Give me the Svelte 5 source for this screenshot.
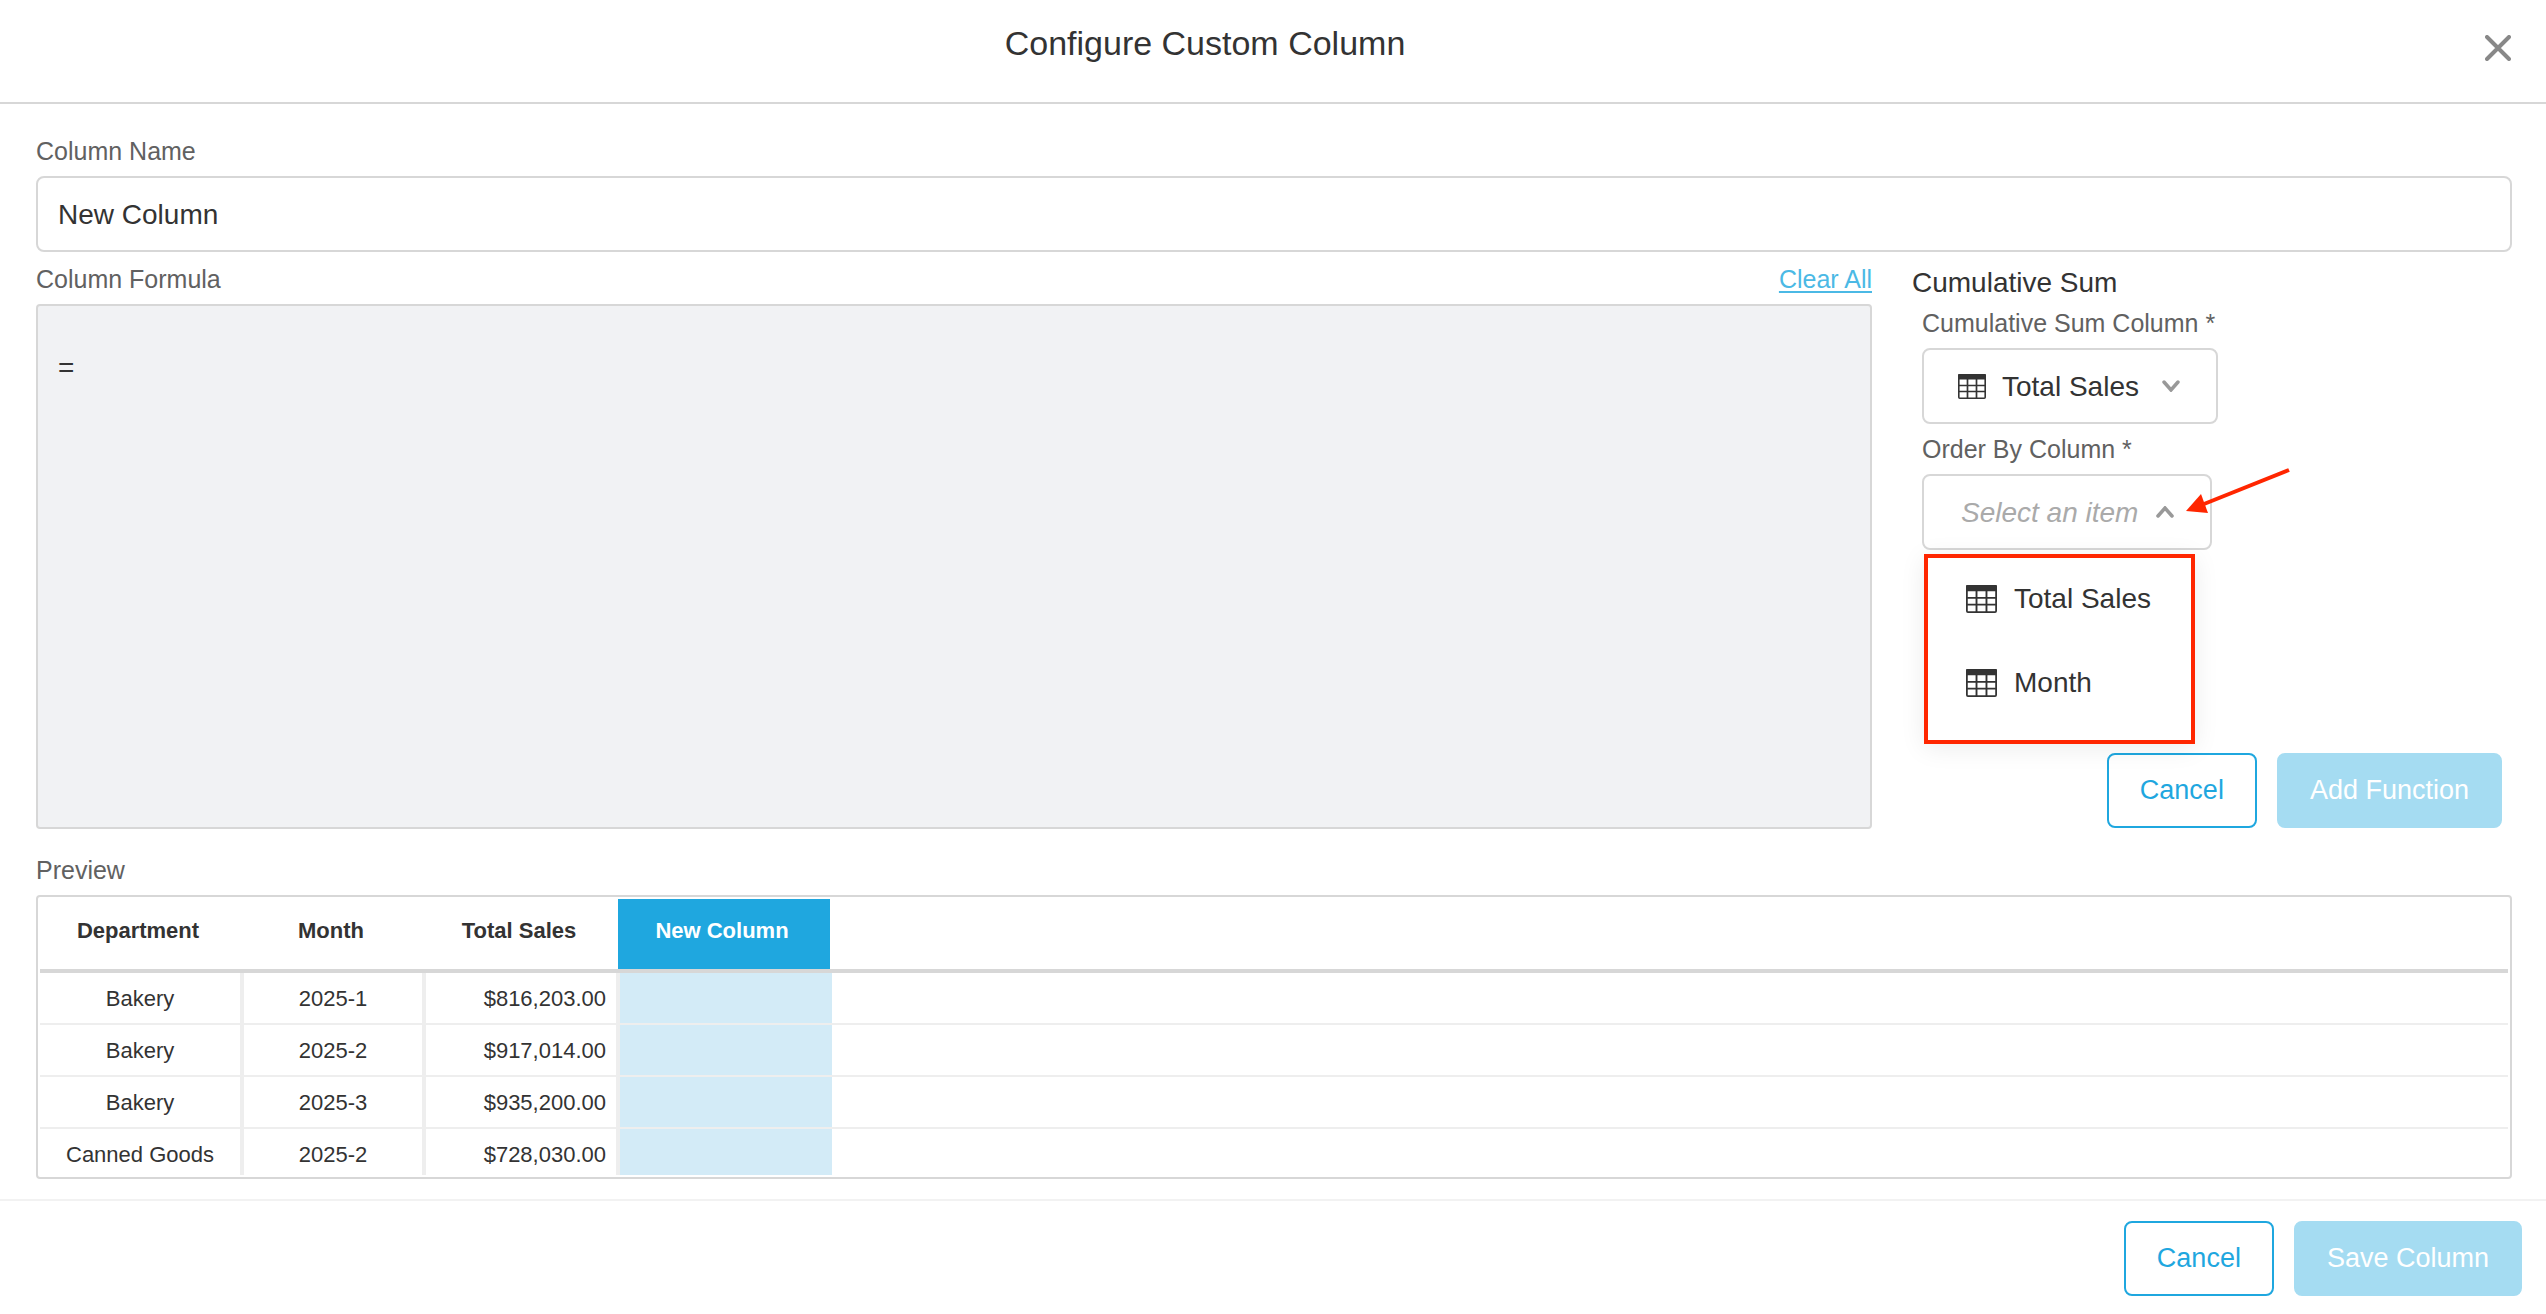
<script>
  const columns = ['Total Sales', 'Month'];
  const rows = [
    { department: 'Bakery', month: '2025-1', sales: '$816,203.00' },
    { department: 'Bakery', month: '2025-2', sales: '$917,014.00' },
    { department: 'Bakery', month: '2025-3', sales: '$935,200.00' },
    { department: 'Canned Goods', month: '2025-2', sales: '$728,030.00' }
  ];
  let name = $state('New Column');
  let formula = $state('=');
  let sumColumn = $state('Total Sales');
  let orderBy = $state('');
  let menuOpen = $state(true);

  function pick(column) {
    orderBy = column;
    menuOpen = false;
  }
</script>

{#snippet tableIcon()}
  <svg class="table-icon" viewBox="0 0 28 25" preserveAspectRatio="none" aria-hidden="true">
    <rect x="0.8" y="0.8" width="26.400" height="23.400" rx="1" fill="none" stroke="currentColor" stroke-width="1.600" />
    <path d="M0 1a1 1 0 0 1 1-1h26a1 1 0 0 1 1 1v4.500H0z" fill="currentColor" />
    <path d="M9.500 5v19M18.500 5v19M1 11.500h26M1 17.500h26" fill="none" stroke="currentColor" stroke-width="1.700" />
  </svg>
{/snippet}

{#snippet chevron(d)}
  <svg class="chevron" viewBox="0 0 18 12" aria-hidden="true">
    <path {d} fill="none" stroke="currentColor" stroke-width="3.500" stroke-linecap="round" />
  </svg>
{/snippet}

<div class="dialog" role="dialog" aria-labelledby="dialog-title">
  <header>
    <h1 id="dialog-title">Configure Custom Column</h1>
    <button class="close" type="button" aria-label="Close">
      <svg viewBox="0 0 26 26" aria-hidden="true">
        <path d="M2 2l22 22M24 2L2 24" fill="none" stroke="currentColor" stroke-width="4" stroke-linecap="round" />
      </svg>
    </button>
  </header>

  <main>
    <label class="caption first" for="column-name">Column Name</label>
    <input id="column-name" type="text" bind:value={name} />

    <div class="editor">
      <section class="formula">
        <div class="formula-head">
          <label class="caption" for="column-formula">Column Formula</label>
          <a href="#clear" onclick={() => (formula = '=')}>Clear All</a>
        </div>
        <textarea id="column-formula" bind:value={formula}></textarea>
      </section>

      <section class="function">
        <h2>Cumulative Sum</h2>
        <div class="fields">
          <label class="caption" for="sum-column">Cumulative Sum Column *</label>
          <div class="select">
            {@render tableIcon()}
            <select id="sum-column" bind:value={sumColumn}>
              {#each columns as column}<option>{column}</option>{/each}
            </select>
            {@render chevron('M2 2l7 8 7-8')}
          </div>

          <label class="caption" for="order-column">Order By Column *</label>
          <div class="select order">
            <select id="order-column" class:empty={!orderBy} bind:value={orderBy}>
              <option value="">Select an item</option>
              {#each columns as column}<option>{column}</option>{/each}
            </select>
            {@render chevron('M2 10l7-8 7 8')}
            {#if menuOpen}
              <div class="menu">
                {#each columns as column}
                  <button type="button" onclick={() => pick(column)}>{@render tableIcon()}{column}</button>
                {/each}
              </div>
            {/if}
            <svg class="pointer" viewBox="0 0 106 48" aria-hidden="true">
              <path d="M103 3L18 37" stroke="currentColor" stroke-width="4" />
              <path d="M0 44L15 27L22 46z" fill="currentColor" />
            </svg>
          </div>
        </div>
        <div class="actions">
          <button class="btn" type="button">Cancel</button>
          <button class="btn primary" type="button" disabled>Add Function</button>
        </div>
      </section>
    </div>

    <h3 class="caption">Preview</h3>
    <div class="preview">
      <table>
        <colgroup>
          <col class="department" /><col class="month" /><col class="sales" /><col class="added" /><col />
        </colgroup>
        <thead>
          <tr>
            <th><span>Department</span></th>
            <th><span>Month</span></th>
            <th><span>Total Sales</span></th>
            <th class="new"><span>{name}</span></th>
            <td></td>
          </tr>
        </thead>
        <tbody>
          {#each rows as row}
            <tr>
              <td>{row.department}</td>
              <td>{row.month}</td>
              <td class="amount">{row.sales}</td>
              <td class="new"></td>
              <td class="rest"></td>
            </tr>
          {/each}
        </tbody>
      </table>
    </div>
  </main>

  <footer>
    <button class="btn" type="button">Cancel</button>
    <button class="btn primary" type="button" disabled>Save Column</button>
  </footer>
</div>

<style>
  :global(body) {
    background: #fff;
  }
  .dialog,
  .dialog * {
    box-sizing: border-box;
  }
  .dialog {
    min-height: 100vh;
    color: #333;
    font-family: 'Liberation Sans', Arial, sans-serif;
    font-size: 28px;
    line-height: 32px;
  }
  button,
  input,
  select,
  textarea {
    font: inherit;
    color: inherit;
  }
  header {
    display: flex;
    align-items: flex-start;
    height: 104px;
    padding-right: 32px;
    border-bottom: 2px solid #d7d7d7;
  }
  h1 {
    flex: 1;
    margin: 0;
    padding-top: 22px;
    font-size: 34px;
    font-weight: 400;
    line-height: 42px;
    text-align: center;
  }
  .close {
    display: flex;
    justify-content: flex-end;
    width: 104px;
    padding: 35px 3px 0 0;
    border: 0;
    background: none;
    color: #888;
  }
  .close svg {
    width: 26px;
    height: 26px;
  }
  main {
    padding: 27px 34px 20px 36px;
  }
  .caption {
    display: block;
    margin: 0;
    color: #616161;
    font-size: 25px;
    font-weight: 400;
    line-height: 40px;
  }
  .first {
    margin-bottom: 5px;
  }
  input {
    display: block;
    width: 100%;
    height: 76px;
    padding: 2px 20px 0;
    border: 2px solid #d7d7d7;
    border-radius: 8px;
    background: #fff;
  }
  .editor {
    display: grid;
    grid-template-columns: minmax(0, 1fr) 600px;
    gap: 40px;
  }
  .formula-head {
    display: flex;
    justify-content: space-between;
    padding: 7px 0 5px;
    font-size: 25px;
    line-height: 40px;
  }
  a {
    color: #4bb9e5;
    text-underline-offset: 3px;
    text-decoration-thickness: 2px;
  }
  textarea {
    display: block;
    width: 100%;
    height: 525px;
    padding: 46px 20px;
    border: 2px solid #d7d7d7;
    border-radius: 4px;
    background: #f1f2f4;
    resize: none;
  }
  .function {
    display: flex;
    flex-direction: column;
    padding: 15px 10px 1px 0;
  }
  h2 {
    margin: 0;
    font-size: 28px;
    font-weight: 400;
    line-height: 32px;
  }
  .fields {
    padding: 4px 0 0 10px;
  }
  .fields .caption {
    height: 45px;
  }
  .select {
    position: relative;
    display: flex;
    align-items: center;
    gap: 16px;
    width: 296px;
    height: 76px;
    margin-bottom: 5px;
    padding: 0 36px 0 34px;
    border: 2px solid #d7d7d7;
    border-radius: 8px;
  }
  .select.order {
    width: 290px;
    padding-left: 37px;
    gap: 12px;
  }
  .select select {
    flex: 1;
    min-width: 0;
    height: 72px;
    padding: 2px 0 0;
    border: 0;
    background: none;
    appearance: none;
  }
  .select .empty {
    color: #aaa;
    font-style: italic;
  }
  .table-icon {
    flex: none;
    width: 28px;
    height: 25px;
  }
  .chevron {
    flex: none;
    width: 18px;
    height: 12px;
    color: #999;
  }
  .menu {
    position: absolute;
    top: 78px;
    left: 0;
    z-index: 1;
    width: 271px;
    padding-bottom: 14px;
    border: 4px solid #ff2600;
    background: #fff;
    box-shadow: 0 4px 24px rgba(0, 0, 0, 0.08);
  }
  .menu button {
    display: flex;
    align-items: center;
    gap: 17px;
    width: 100%;
    height: 84px;
    padding: 0 0 2px 38px;
    border: 0;
    background: none;
  }
  .menu .table-icon {
    width: 31px;
    height: 28px;
  }
  .pointer {
    position: absolute;
    top: -9px;
    left: 262px;
    z-index: 1;
    width: 106px;
    height: 48px;
    color: #ff2600;
  }
  .actions,
  footer {
    display: flex;
    justify-content: flex-end;
    gap: 20px;
  }
  .actions {
    margin-top: auto;
  }
  .btn {
    height: 75px;
    padding: 0 31px 2px;
    border: 2px solid #1fa7df;
    border-radius: 8px;
    background: #fff;
    color: #1fa7df;
    font-size: 27px;
  }
  .primary {
    border-color: #a5dcf2;
    background: #a5dcf2;
    color: #fff;
  }
  h3.caption {
    padding: 21px 0 5px;
  }
  .preview {
    height: 284px;
    padding: 2px;
    border: 2px solid #d7d7d7;
    border-radius: 4px;
    overflow: hidden;
  }
  table {
    width: 100%;
    table-layout: fixed;
    border-collapse: separate;
    border-spacing: 0;
    font-size: 22px;
    line-height: 26px;
  }
  .department {
    width: 204px;
  }
  .month {
    width: 182px;
  }
  .sales {
    width: 194px;
  }
  .added {
    width: 212px;
  }
  th,
  td {
    padding: 0;
    text-align: center;
  }
  thead th,
  thead td {
    height: 74px;
    border-bottom: 4px solid #d7d7d7;
  }
  th span {
    display: block;
    margin: 0 8px 6px 0;
  }
  th.new span {
    margin: 0 2px 0 -2px;
    padding: 19px 4px 25px 0;
    background: #1fa7df;
    color: #fff;
  }
  tbody td {
    height: 52px;
    padding-top: 13px;
    border-right: 4px solid #eee;
    border-bottom: 2px solid #eee;
    vertical-align: top;
  }
  tbody .amount {
    padding-right: 10px;
    text-align: right;
  }
  tbody .new {
    border-right: 0;
    background: #d3ebf7;
    background-clip: padding-box;
  }
  tbody .rest {
    border-right: 0;
  }
  tbody tr:last-child td {
    height: 46px;
    border-bottom: 0;
  }
  footer {
    padding: 20px 24px 18px;
    border-top: 2px solid #f2f2f2;
  }
</style>
